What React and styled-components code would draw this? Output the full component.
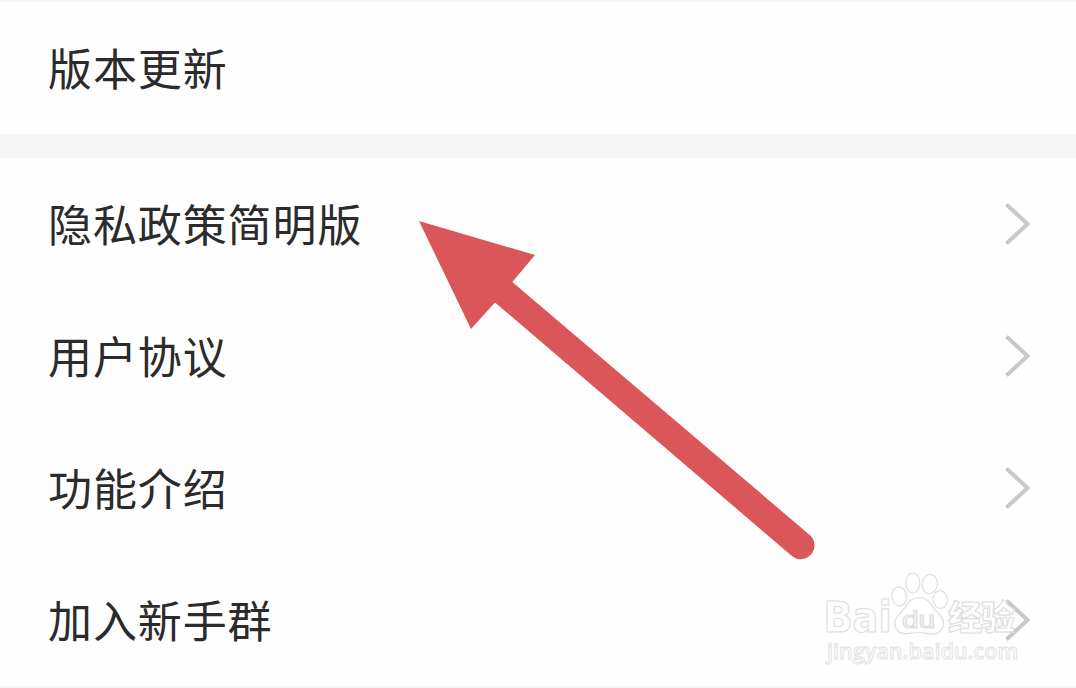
import React from 'react';
import styled, { createGlobalStyle } from 'styled-components';

const sections = [
  [{ label: '版本更新' }],
  [
    { label: '隐私政策简明版', link: true },
    { label: '用户协议', link: true },
    { label: '功能介绍', link: true },
    { label: '加入新手群', link: true },
  ],
];

const Chevron = () => (
  <ChevronIcon viewBox="0 0 28 44">
    <path d="M2.5 2.5 L23.5 22 L2.5 41.5" />
  </ChevronIcon>
);

const Watermark = () => (
  <WatermarkMark viewBox="820 566 206 104">
    <text className="latin" x="823.5" y="632.3" fontSize="43" textLength="68" lengthAdjust="spacingAndGlyphs">
      Bai
    </text>
    <path d="M919 597.5 C926 597.5 930 602 933 607 C936 612 943 616 943.5 623 C944 630 938 634.5 932 634 C926 633.5 923 632.5 918 632.5 C912 632.5 909 634 904 633.5 C898 633 894.5 628 894.8 622.5 C895.5 616 902 612.5 905 607.5 C908 602 912 597.5 919 597.5 Z" />
    <ellipse cx="899.2" cy="596.4" rx="7.3" ry="9.6" transform="rotate(-8 899.2 596.4)" />
    <ellipse cx="912.8" cy="582.8" rx="7.1" ry="10" />
    <ellipse cx="929.7" cy="584" rx="7.6" ry="9.6" transform="rotate(10 929.7 584)" />
    <ellipse cx="940.2" cy="599.5" rx="7.3" ry="8.8" transform="rotate(-8 940.2 599.5)" />
    <text className="du" x="902" y="628" fontSize="23" textLength="33" lengthAdjust="spacingAndGlyphs">
      du
    </text>
    <text className="cjk" x="948" y="630" fontSize="34" textLength="67">
      经验
    </text>
    <text className="url" x="827" y="658.5" fontSize="22" textLength="191" lengthAdjust="spacingAndGlyphs">
      jingyan.baidu.com
    </text>
  </WatermarkMark>
);

export default function App() {
  return (
    <>
      <GlobalStyle />
      <Screen>
        {sections.map(rows => (
          <Section key={rows[0].label}>
            {rows.map(row => (
              <Row key={row.label}>
                <Label>{row.label}</Label>
                {row.link && <Chevron />}
              </Row>
            ))}
          </Section>
        ))}
        <Pointer viewBox="0 0 400 342">
          <path d="M1 1 L117 35 L94.3 62 L392.3 315.5 A13.8 13.8 0 0 1 374.5 336.5 L77 82.5 L53 109 Z" />
        </Pointer>
        <Watermark />
      </Screen>
    </>
  );
}

const GlobalStyle = createGlobalStyle`
  body {
    margin: 0;
    background: #fefefe;
  }
`;

const Screen = styled.main`
  box-sizing: border-box;
  position: relative;
  height: 688px;
  padding: 2px 0 0;
  overflow: hidden;
  background: #f5f5f5;
  font-family: 'Noto Sans CJK SC', sans-serif;
`;

const Section = styled.section`
  background: #fefefe;

  & + & {
    margin-top: 24px;
  }
`;

const Row = styled.div`
  box-sizing: border-box;
  display: flex;
  align-items: center;
  justify-content: space-between;
  height: 132px;
  padding: 0 44px 0 48px;
`;

const Label = styled.span`
  padding-bottom: 1px;
  font-size: 44px;
  line-height: 65px;
  letter-spacing: 0.9px;
  color: #2b2b2b;
`;

const ChevronIcon = styled.svg`
  width: 28px;
  height: 44px;
  fill: none;
  stroke: #c8c8c8;
  stroke-width: 4;
`;

const Pointer = styled.svg`
  position: absolute;
  top: 220px;
  left: 418px;
  width: 400px;
  height: 342px;
  fill: #db565b;
`;

const WatermarkMark = styled.svg`
  position: absolute;
  top: 566px;
  left: 820px;
  width: 206px;
  height: 104px;
  fill: rgba(255, 255, 255, 0.6);
  stroke: #dedede;
  stroke-width: 1.2;

  text {
    font-family: 'DejaVu Sans', sans-serif;
    font-weight: 700;
  }

  .du {
    font-family: 'Liberation Sans', sans-serif;
    font-weight: 400;
  }

  .cjk {
    font-family: 'Noto Sans CJK SC', sans-serif;
    font-weight: 900;
  }

  .url {
    font-family: 'Open Sans', sans-serif;
    font-weight: 600;
    stroke: #e2e2e2;
    stroke-width: 1;
  }
`;
